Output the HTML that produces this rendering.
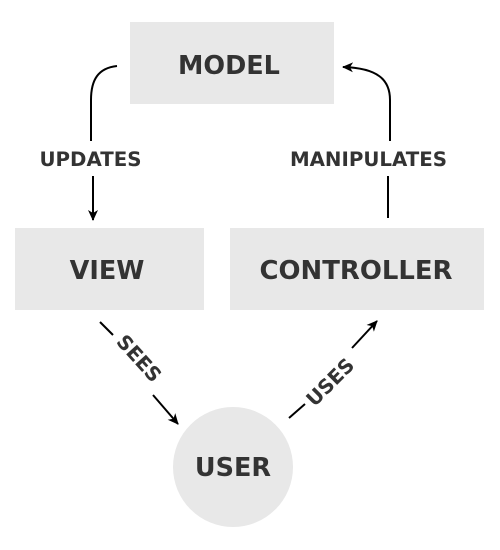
<!DOCTYPE html><html><head><style>body{margin:0;background:#fff}svg{display:block}text{font-family:"DejaVu Sans","Liberation Sans",sans-serif;font-weight:bold;fill:#333}</style></head><body>
<svg width="500" height="550" viewBox="0 0 500 550">
<defs><marker id="a" markerWidth="12" markerHeight="12" refX="10" refY="6" orient="auto" markerUnits="userSpaceOnUse"><path d="M0,1 L11,6 L0,11 L3,6 z" fill="#000"/></marker></defs>
<rect x="130" y="22" width="204" height="82" fill="#e8e8e8"/>
<rect x="15" y="228" width="189" height="82" fill="#e8e8e8"/>
<rect x="230" y="228" width="254" height="82" fill="#e8e8e8"/>
<circle cx="233" cy="467" r="60" fill="#e8e8e8"/>
<text x="229" y="74" font-size="25.5" text-anchor="middle">MODEL</text>
<text x="107" y="279" font-size="25.5" text-anchor="middle">VIEW</text>
<text x="356" y="279" font-size="25.9" text-anchor="middle">CONTROLLER</text>
<text x="233" y="476" font-size="25.5" text-anchor="middle">USER</text>
<text x="90.5" y="166" font-size="19.8" text-anchor="middle">UPDATES</text>
<text x="368.5" y="166" font-size="19.8" text-anchor="middle">MANIPULATES</text>
<g fill="none" stroke="#000" stroke-width="2">
<path d="M117,66 C98,68 91,80 91,100 L91,141"/>
<path d="M93,176 L93,220" marker-end="url(#a)"/>
<path d="M388,218 L388,176"/>
<path d="M390,141 L390,100 C390,80 378,68 343,67" marker-end="url(#a)"/>
<path d="M100,322 L113,335"/>
<path d="M153,395 L178,424" marker-end="url(#a)"/>
<path d="M289,418 L305,404"/>
<path d="M352,348 L377,321" marker-end="url(#a)"/>
</g>
<text transform="translate(134,363) rotate(48)" font-size="19.8" text-anchor="middle">SEES</text>
<text transform="translate(335,387) rotate(-45)" font-size="19.8" text-anchor="middle">USES</text>
</svg></body></html>
